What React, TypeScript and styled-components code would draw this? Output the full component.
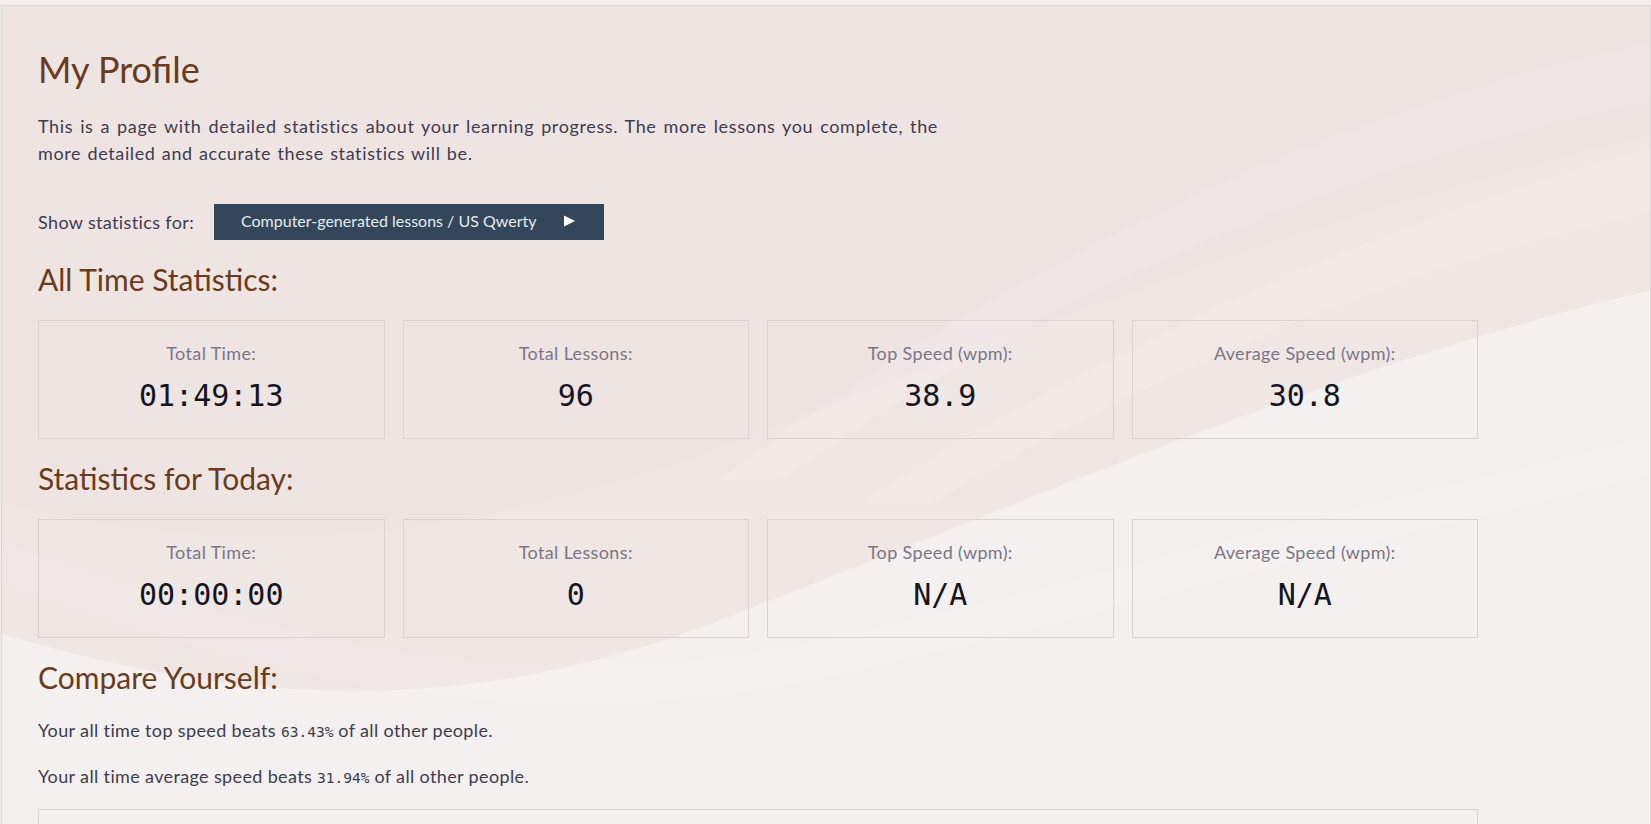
import React from "react";
import styled, { createGlobalStyle } from "styled-components";

const GlobalStyle = createGlobalStyle`
  html, body { margin: 0; padding: 0; background: #f1edeb; }
  body { font-family: Lato, "Open Sans", sans-serif; }
  * { box-sizing: border-box; }
`;

const Root = styled.div`
  padding: 5px 0 0 1px;
  min-height: 824px;
  overflow: hidden;
`;

const Frame = styled.main`
  position: relative;
  width: 1650px;
  min-height: 830px;
  border: 1px solid #dcd7d4;
  border-bottom: none;
  background: #f3f0ef;
  padding: 41px 0 40px 36px;
  overflow: hidden;
`;

const Backdrop = styled.svg`
  position: absolute;
  inset: 0;
  width: 100%;
  height: 100%;
  z-index: 0;
  pointer-events: none;
`;

const Content = styled.div`
  position: relative;
  z-index: 1;
  width: 1440px;
  display: flex;
  flex-direction: column;
`;

const Title = styled.h1`
  margin: 0;
  font-size: 36px;
  line-height: 44px;
  font-weight: 400;
  color: #6b3b1d;
`;

const Intro = styled.p`
  margin: 22px 0 0;
  width: 900px;
  font-size: 18px;
  line-height: 27px;
  color: #3e3c50;
  text-align: justify;
  letter-spacing: 0.035em;
  word-spacing: 1px;
`;

const SelectorRow = styled.div`
  margin-top: 37px;
  display: flex;
  align-items: center;
  height: 36px;
`;

const SelectorLabel = styled.span`
  width: 176px;
  font-size: 18px;
  color: #3e3c50;
  letter-spacing: 0.02em;
`;

const SelectorButton = styled.button`
  width: 390px;
  height: 36px;
  border: none;
  background: #33465a;
  color: #e6eaef;
  font-family: Lato, "Open Sans", sans-serif;
  font-size: 16px;
  line-height: 20px;
  display: flex;
  align-items: center;
  justify-content: space-between;
  padding: 0 29px 2px 27px;
  cursor: pointer;
`;

const SectionTitle = styled.h2<{ $last?: boolean }>`
  margin: 21px 0 ${(p) => (p.$last ? "0" : "23px")};
  font-size: 30px;
  line-height: 36px;
  font-weight: 400;
  color: #6b3b1d;
`;

const CardGrid = styled.div`
  display: grid;
  grid-template-columns: repeat(4, 1fr);
  gap: 18px;
`;

const Card = styled.div`
  height: 119px;
  border: 1px solid #d9d4d1;
  padding: 21px 0 24px;
  display: flex;
  flex-direction: column;
  align-items: center;
`;

const CardLabel = styled.div`
  font-size: 18px;
  line-height: 22px;
  color: #7a7688;
  letter-spacing: 0.02em;
`;

const CardValue = styled.div`
  margin-top: 14px;
  font-family: "DejaVu Sans Mono", "Liberation Mono", monospace;
  font-size: 30px;
  line-height: 36px;
  color: #15141f;
`;

const CompareText = styled.p<{ $first?: boolean }>`
  margin: ${(p) => (p.$first ? "22px" : "17px")} 0 0;
  font-size: 18px;
  line-height: 27px;
  color: #3e3c50;
  letter-spacing: 0.02em;
`;

const Mono = styled.span`
  font-family: "DejaVu Sans Mono", "Liberation Mono", monospace;
  font-size: 14.5px;
  letter-spacing: 0;
`;

const ChartBox = styled.div`
  margin-top: 17px;
  height: 140px;
  border: 1px solid #d9d4d1;
`;

type Stat = { label: string; value: string };

const allTime: Stat[] = [
  { label: "Total Time:", value: "01:49:13" },
  { label: "Total Lessons:", value: "96" },
  { label: "Top Speed (wpm):", value: "38.9" },
  { label: "Average Speed (wpm):", value: "30.8" },
];

const today: Stat[] = [
  { label: "Total Time:", value: "00:00:00" },
  { label: "Total Lessons:", value: "0" },
  { label: "Top Speed (wpm):", value: "N/A" },
  { label: "Average Speed (wpm):", value: "N/A" },
];

function StatCards({ stats }: { stats: Stat[] }) {
  return (
    <CardGrid>
      {stats.map((s) => (
        <Card key={s.label}>
          <CardLabel>{s.label}</CardLabel>
          <CardValue>{s.value}</CardValue>
        </Card>
      ))}
    </CardGrid>
  );
}

export default function App() {
  return (
    <>
      <GlobalStyle />
      <Root>
        <Frame>
          <Backdrop viewBox="0 0 1650 830" preserveAspectRatio="none">
            <path
              d="M0 0 H1650 V240 C1350 300 1050 410 760 505 C560 575 330 615 0 530 Z"
              fill="#efe7e4"
            />
            <path
              d="M0 0 H1650 V110 C1300 180 1000 280 700 380 C450 450 250 470 0 420 Z"
              fill="#ede5e2"
              opacity="0.6"
            />
            <path
              d="M1650 30 C1300 100 1000 220 720 400 L780 400 C1050 240 1350 130 1650 80 Z"
              fill="#ffffff"
              opacity="0.1"
            />
            <path
              d="M1650 120 C1350 190 1080 300 860 420 L930 420 C1150 310 1400 220 1650 175 Z"
              fill="#ffffff"
              opacity="0.1"
            />
            <path
              d="M0 470 C300 560 520 600 800 555 C1000 520 1200 470 1650 380"
              fill="none"
              stroke="#ffffff"
              strokeWidth="30"
              opacity="0.08"
            />
          </Backdrop>
          <Content>
            <Title>My Profile</Title>
            <Intro>
              This is a page with detailed statistics about your learning progress. The more
              lessons you complete, the more detailed and accurate these statistics will be.
            </Intro>
            <SelectorRow>
              <SelectorLabel>Show statistics for:</SelectorLabel>
              <SelectorButton>
                <span>Computer-generated lessons / US Qwerty</span>
                <svg width="12" height="12" viewBox="0 0 12 12" aria-hidden="true">
                  <polygon points="1,0.5 12,6 1,11.5" fill="#ffffff" />
                </svg>
              </SelectorButton>
            </SelectorRow>
            <SectionTitle>All Time Statistics:</SectionTitle>
            <StatCards stats={allTime} />
            <SectionTitle>Statistics for Today:</SectionTitle>
            <StatCards stats={today} />
            <SectionTitle $last>Compare Yourself:</SectionTitle>
            <CompareText $first>
              Your all time top speed beats <Mono>63.43%</Mono> of all other people.
            </CompareText>
            <CompareText>
              Your all time average speed beats <Mono>31.94%</Mono> of all other people.
            </CompareText>
            <ChartBox />
          </Content>
        </Frame>
      </Root>
    </>
  );
}
